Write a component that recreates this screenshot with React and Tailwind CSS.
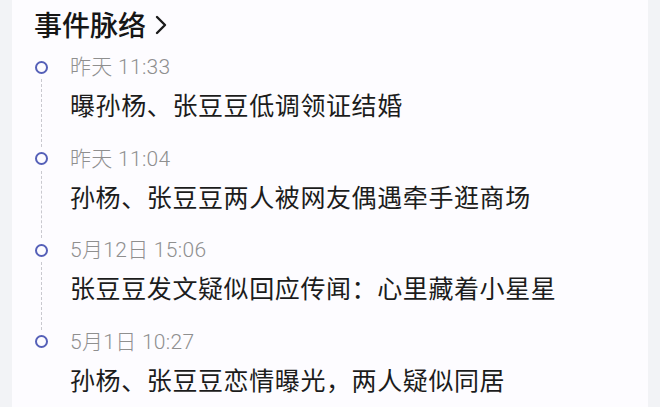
import React from "react";

const items = [
  { time: "昨天 11:33", text: "曝孙杨、张豆豆低调领证结婚" },
  { time: "昨天 11:04", text: "孙杨、张豆豆两人被网友偶遇牵手逛商场" },
  { time: "5月12日 15:06", text: "张豆豆发文疑似回应传闻：心里藏着小星星" },
  { time: "5月1日 10:27", text: "孙杨、张豆豆恋情曝光，两人疑似同居" },
];

export default function App() {
  return (
    <div
      className="w-[660px] h-[407px] bg-[#f2f3f6] px-[12px] overflow-hidden"
      style={{ fontFamily: '"Noto Sans CJK SC", "Noto Sans", sans-serif' }}
    >
      <div className="h-full bg-[#fdfcff]">
        <div className="flex items-center pl-[22px] pt-[6px] h-[42px]">
          <span className="text-[28px] leading-[36px] font-medium text-[#161616]">事件脉络</span>
          <svg width="16" height="22" viewBox="0 0 16 22" className="ml-[7px] mt-[2px]">
            <polyline points="4,3 12,11 4,19" fill="none" stroke="#1a1a1a" strokeWidth="2.4" strokeLinecap="round" strokeLinejoin="round" />
          </svg>
        </div>
        <div className="pt-[13px]">
          {items.map((it, i) => (
            <div key={i} className="flex">
              <div className="w-[58px] flex flex-col items-center pl-[1px] shrink-0">
                <div className="h-[24px] flex items-center">
                  <div className="w-[13px] h-[13px] rounded-full border-[2.5px] border-[#5560b8]" />
                </div>
                {i < items.length - 1 && (
                  <div className="flex-1 border-l border-dashed border-[#c9c9cf]" />
                )}
              </div>
              <div className="pb-[26.5px]">
                <div
                  className="h-[24px] text-[21px] leading-[24px] text-[#8f8f8f] tracking-[0.3px] font-light"
                  style={{ fontFamily: 'Roboto, "Noto Sans CJK SC", sans-serif' }}
                >
                  {it.time}
                </div>
                <div className="mt-[9px] h-[32px] text-[25px] leading-[32px] text-[#1c1c1c] tracking-[0.6px]">{it.text}</div>
              </div>
            </div>
          ))}
        </div>
      </div>
    </div>
  );
}
